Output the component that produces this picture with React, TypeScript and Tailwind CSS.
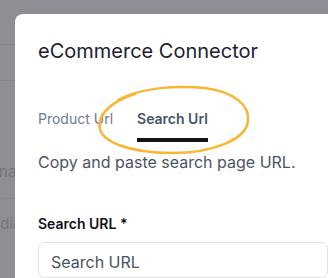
export default function App() {
  return (
    <div className="relative flex h-[278px] w-[328px] overflow-hidden bg-[#8e8f95] font-['Inter','Liberation_Sans',sans-serif]">
      {/* page behind the overlay */}
      <div className="flex w-[15px] shrink-0 flex-col overflow-hidden text-[15px] text-[#75767c]">
        <div className="h-[45px] shrink-0 border-b border-[#86878c]" />
        <div className="h-[36px] shrink-0 border-b border-[#86878c]" />
        <div className="ml-[-10px] mt-[81px] whitespace-nowrap leading-5">Enable</div>
        <div className="mt-[16px] shrink-0 border-b border-[#86878c]" />
        <div className="ml-[-22px] mt-[15px] whitespace-nowrap leading-5">Media</div>
      </div>

      {/* modal */}
      <div className="mt-[14px] flex flex-1 flex-col rounded-tl-lg bg-white pl-[23px] pt-[23px]">
        <h2 className="text-[20px] font-normal leading-7 text-[#1c2130]">eCommerce Connector</h2>

        <div className="mt-[44px] flex gap-6 text-[14px] leading-5">
          <div className="pb-[9px] text-[#6b7a90]">Product Url</div>
          <div className="border-b-4 border-[#141414] pb-[9px] font-semibold text-[#4a5366]">Search Url</div>
        </div>

        <p className="mt-[8px] text-[16px] leading-6 text-[#4b5466]">Copy and paste search page URL.</p>

        <label className="mt-[40px] text-[14px] font-semibold leading-5 text-[#111318]">Search URL *</label>

        <div className="mt-[8px] h-[44px] rounded-md border border-[#e2e4e8] px-3 pt-[7px] text-[16px] leading-6 text-[#4b5260]">
          Search URL
        </div>
      </div>

      {/* hand drawn highlight */}
      <svg className="pointer-events-none absolute left-0 top-0" width="328" height="278" viewBox="0 0 328 278">
        <path
          d="M118 100 C 140 88, 175 85, 205 88 C 235 92, 250 106, 248 121 C 246 140, 212 153, 172 153 C 130 153, 100 142, 99.5 126 C 99 112, 115 100, 135 94"
          fill="none"
          stroke="#f8b633"
          strokeWidth="2.5"
          strokeLinecap="round"
        />
      </svg>
    </div>
  )
}
